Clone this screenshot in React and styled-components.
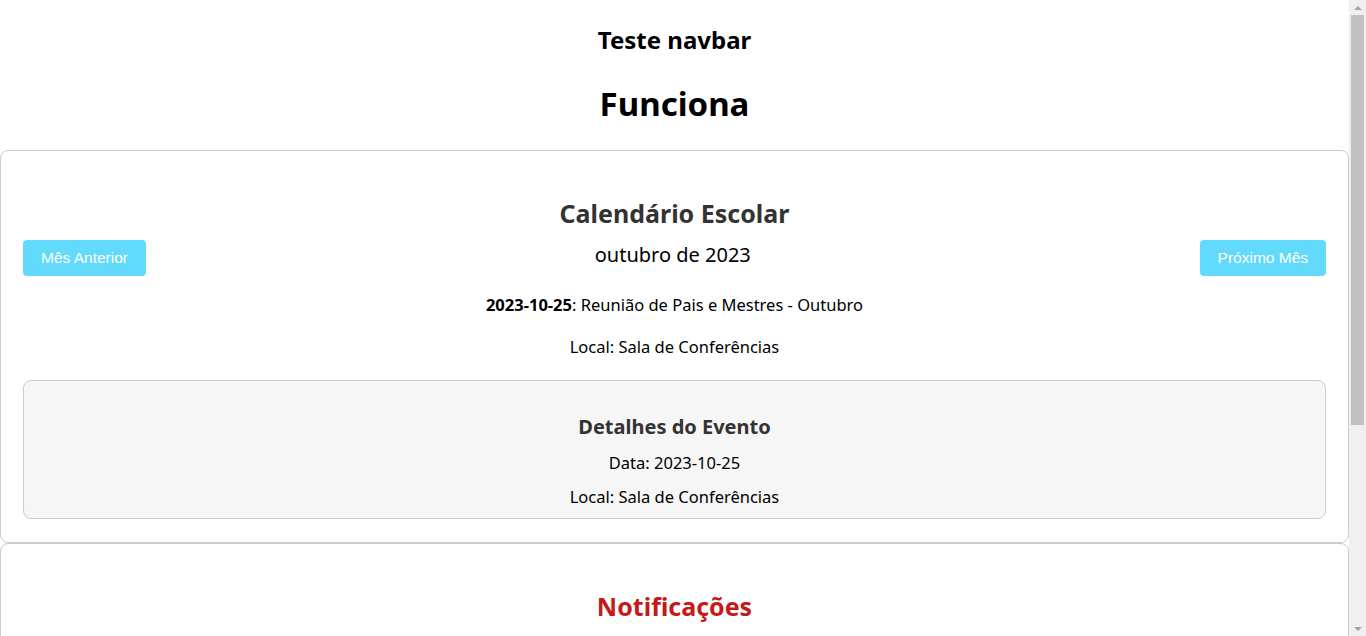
import React from "react";
import styled, { createGlobalStyle } from "styled-components";

const GlobalStyle = createGlobalStyle`
  html, body {
    margin: 0;
    padding: 0;
    background: #fff;
    font-family: "Noto Sans", "Open Sans", sans-serif;
    color: #000;
    overflow: hidden;
  }
`;

const Frame = styled.div`
  display: flex;
  height: 100vh;
`;

const Content = styled.main`
  flex: 1;
  min-width: 0;
  overflow: hidden;
`;

const ScrollTrack = styled.aside`
  width: 17px;
  flex-shrink: 0;
  background: #f0f0f0;
  display: flex;
  flex-direction: column;
  align-items: center;
`;

const ScrollArrow = styled.div`
  height: 15px;
  width: 100%;
  display: flex;
  align-items: center;
  justify-content: center;
  margin-top: ${(p) => (p.down ? "auto" : "0")};
`;

const ScrollThumb = styled.div`
  width: 13px;
  height: 410px;
  background: #c1c1c1;
`;

const Navbar = styled.header`
  text-align: center;
`;

const NavTitle = styled.h2`
  margin: 24px 0 0;
  font-size: 24px;
  line-height: 32px;
  font-weight: 700;
`;

const PageTitle = styled.h1`
  margin: 26px 0 24px;
  font-size: 33px;
  line-height: 44px;
  font-weight: 700;
  text-align: center;
`;

const Card = styled.section`
  border: 1px solid #ccc;
  border-radius: 8px;
  padding: 46px 22px 23px;
  min-height: ${(p) => (p.tall ? "320px" : "auto")};
  text-align: center;
  background: #fff;
`;

const CardTitle = styled.h2`
  margin: 0;
  font-size: 25px;
  line-height: 32px;
  font-weight: 700;
  color: ${(p) => p.color || "#333"};
`;

const MonthRow = styled.div`
  display: flex;
  justify-content: space-between;
  align-items: flex-start;
  margin-top: 11px;
`;

const NavButton = styled.button`
  height: 36px;
  padding: 0 18px;
  border: none;
  border-radius: 4px;
  background: #61dafb;
  color: #fff;
  font-family: "Liberation Sans", Arial, sans-serif;
  font-size: 15.5px;
  cursor: pointer;
`;

const MonthLabel = styled.div`
  font-size: 20px;
  line-height: 30px;
`;

const Line = styled.p`
  margin: ${(p) => p.gap || 0}px 0 0;
  font-size: 16.5px;
  line-height: 24px;
`;

const Details = styled.div`
  margin-top: 21px;
  padding: 32px 20px 9px;
  background: #f6f6f6;
  border: 1px solid #ccc;
  border-radius: 8px;
`;

const DetailsTitle = styled.h3`
  margin: 0 0 10px;
  font-size: 20px;
  line-height: 28px;
  font-weight: 700;
  color: #333;
`;

const Arrow = ({ down }) => (
  <svg width="8" height="4" viewBox="0 0 8 4">
    <polygon
      points={down ? "0,0 8,0 4,4" : "0,4 8,4 4,0"}
      fill="#a3a3a3"
    />
  </svg>
);

export default function App() {
  return (
    <Frame>
      <GlobalStyle />
      <Content>
        <Navbar>
          <NavTitle>Teste navbar</NavTitle>
        </Navbar>
        <PageTitle>Funciona</PageTitle>
        <Card>
          <CardTitle>Calendário Escolar</CardTitle>
          <MonthRow>
            <NavButton>Mês Anterior</NavButton>
            <MonthLabel>outubro de 2023</MonthLabel>
            <NavButton>Próximo Mês</NavButton>
          </MonthRow>
          <Line gap={17}>
            <strong>2023-10-25</strong>: Reunião de Pais e Mestres - Outubro
          </Line>
          <Line gap={18}>Local: Sala de Conferências</Line>
          <Details>
            <DetailsTitle>Detalhes do Evento</DetailsTitle>
            <Line>Data: 2023-10-25</Line>
            <Line gap={10}>Local: Sala de Conferências</Line>
          </Details>
        </Card>
        <Card tall>
          <CardTitle color="#c41a1a">Notificações</CardTitle>
        </Card>
      </Content>
      <ScrollTrack>
        <ScrollArrow>
          <Arrow />
        </ScrollArrow>
        <ScrollThumb />
        <ScrollArrow down>
          <Arrow down />
        </ScrollArrow>
      </ScrollTrack>
    </Frame>
  );
}
